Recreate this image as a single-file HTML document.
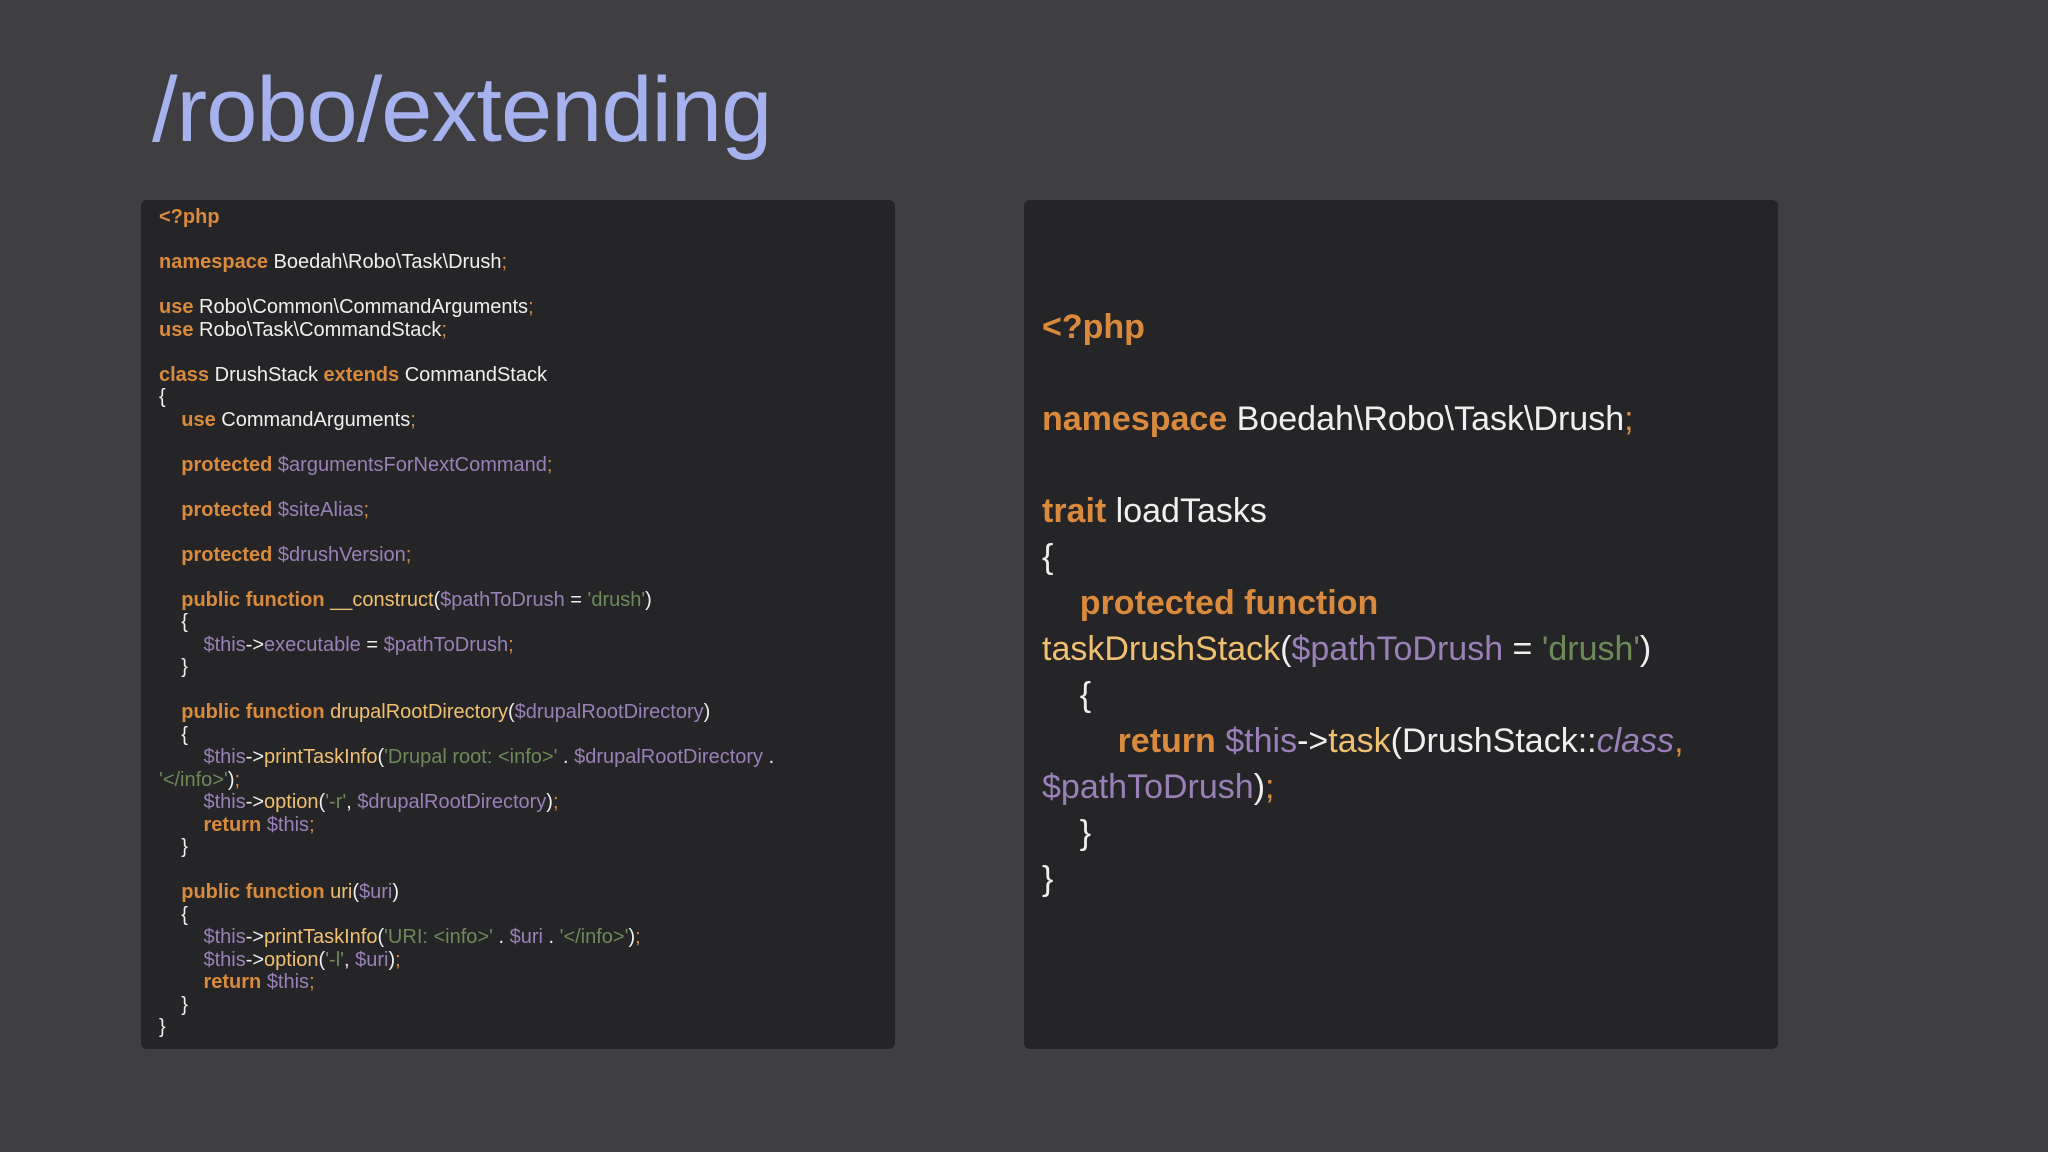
<!DOCTYPE html>
<html><head><meta charset="utf-8"><style>
html,body{margin:0;padding:0}
body{width:2048px;height:1152px;background:#3f3f42;position:relative;overflow:hidden;font-family:"Liberation Sans",sans-serif}
h1{position:absolute;left:152px;top:58px;margin:0;font-weight:normal;font-size:92px;color:#a6b2ee;letter-spacing:-1px}
.panel{position:absolute;top:200px;width:754px;height:849px;background:#252527;border-radius:6px}
pre{margin:0;position:absolute;font-family:"Liberation Sans",sans-serif;color:#efefef;white-space:pre}
.l{left:18px;top:6px;font-size:20px;line-height:22.5px}
.r{left:18px;top:104px;font-size:34px;line-height:46px}
.k{color:#d98a3d;font-weight:bold}
.v{color:#9a80b8}
.s{color:#6d8a58}
.f{color:#f0c070}
.p{color:#d98a3d}
i{font-style:italic}
</style></head><body>
<h1>/robo/extending</h1>
<div class="panel" style="left:141px">
<pre class="l"><span class="k">&lt;?php</span>

<span class="k">namespace</span> Boedah\Robo\Task\Drush<span class="p">;</span>

<span class="k">use</span> Robo\Common\CommandArguments<span class="p">;</span>
<span class="k">use</span> Robo\Task\CommandStack<span class="p">;</span>

<span class="k">class</span> DrushStack <span class="k">extends</span> CommandStack
{
    <span class="k">use</span> CommandArguments<span class="p">;</span>

    <span class="k">protected</span> <span class="v">$argumentsForNextCommand</span><span class="p">;</span>

    <span class="k">protected</span> <span class="v">$siteAlias</span><span class="p">;</span>

    <span class="k">protected</span> <span class="v">$drushVersion</span><span class="p">;</span>

    <span class="k">public function</span> <span class="f">__construct</span>(<span class="v">$pathToDrush</span> = <span class="s">'drush'</span>)
    {
        <span class="v">$this</span>-&gt;<span class="v">executable</span> = <span class="v">$pathToDrush</span><span class="p">;</span>
    }

    <span class="k">public function</span> <span class="f">drupalRootDirectory</span>(<span class="v">$drupalRootDirectory</span>)
    {
        <span class="v">$this</span>-&gt;<span class="f">printTaskInfo</span>(<span class="s">'Drupal root: &lt;info&gt;'</span> . <span class="v">$drupalRootDirectory</span> .
<span class="s">'&lt;/info&gt;'</span>)<span class="p">;</span>
        <span class="v">$this</span>-&gt;<span class="f">option</span>(<span class="s">'-r'</span>, <span class="v">$drupalRootDirectory</span>)<span class="p">;</span>
        <span class="k">return</span> <span class="v">$this</span><span class="p">;</span>
    }

    <span class="k">public function</span> <span class="f">uri</span>(<span class="v">$uri</span>)
    {
        <span class="v">$this</span>-&gt;<span class="f">printTaskInfo</span>(<span class="s">'URI: &lt;info&gt;'</span> . <span class="v">$uri</span> . <span class="s">'&lt;/info&gt;'</span>)<span class="p">;</span>
        <span class="v">$this</span>-&gt;<span class="f">option</span>(<span class="s">'-l'</span>, <span class="v">$uri</span>)<span class="p">;</span>
        <span class="k">return</span> <span class="v">$this</span><span class="p">;</span>
    }
}</pre>
</div>
<div class="panel" style="left:1024px">
<pre class="r"><span class="k">&lt;?php</span>

<span class="k">namespace</span> Boedah\Robo\Task\Drush<span class="p">;</span>

<span class="k">trait</span> loadTasks
{
    <span class="k">protected function</span>
<span class="f">taskDrushStack</span>(<span class="v">$pathToDrush</span> = <span class="s">'drush'</span>)
    {
        <span class="k">return</span> <span class="v">$this</span>-&gt;<span class="f">task</span>(DrushStack::<span class="v"><i>class</i></span><span class="p">,</span>
<span class="v">$pathToDrush</span>)<span class="p">;</span>
    }
}</pre>
</div>
</body></html>
